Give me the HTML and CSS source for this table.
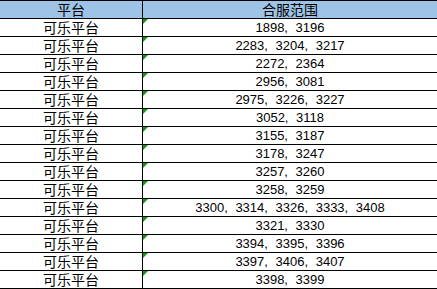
FILE: index.html
```html
<!DOCTYPE html>
<html lang="zh">
<head>
<meta charset="utf-8">
<link rel="stylesheet" href="styles.css">
</head>
<body>
<div class="sheet">
  <div class="row head"><div class="cell c1">平台</div><div class="cell c2">合服范围</div></div>
  <div class="row"><div class="cell c1">可乐平台</div><div class="cell c2 num">1898, 3196</div></div>
  <div class="row"><div class="cell c1">可乐平台</div><div class="cell c2 num">2283, 3204, 3217</div></div>
  <div class="row"><div class="cell c1">可乐平台</div><div class="cell c2 num">2272, 2364</div></div>
  <div class="row"><div class="cell c1">可乐平台</div><div class="cell c2 num">2956, 3081</div></div>
  <div class="row"><div class="cell c1">可乐平台</div><div class="cell c2 num">2975, 3226, 3227</div></div>
  <div class="row"><div class="cell c1">可乐平台</div><div class="cell c2 num">3052, 3118</div></div>
  <div class="row"><div class="cell c1">可乐平台</div><div class="cell c2 num">3155, 3187</div></div>
  <div class="row"><div class="cell c1">可乐平台</div><div class="cell c2 num">3178, 3247</div></div>
  <div class="row"><div class="cell c1">可乐平台</div><div class="cell c2 num">3257, 3260</div></div>
  <div class="row"><div class="cell c1">可乐平台</div><div class="cell c2 num">3258, 3259</div></div>
  <div class="row"><div class="cell c1">可乐平台</div><div class="cell c2 num">3300, 3314, 3326, 3333, 3408</div></div>
  <div class="row"><div class="cell c1">可乐平台</div><div class="cell c2 num">3321, 3330</div></div>
  <div class="row"><div class="cell c1">可乐平台</div><div class="cell c2 num">3394, 3395, 3396</div></div>
  <div class="row"><div class="cell c1">可乐平台</div><div class="cell c2 num">3397, 3406, 3407</div></div>
  <div class="row"><div class="cell c1">可乐平台</div><div class="cell c2 num">3398, 3399</div></div>
</div>
</body>
</html>
```
FILE: styles.css
```css
html, body {
  margin: 0;
  padding: 0;
  background: #ffffff;
  overflow: hidden;
}
.sheet {
  width: 437px;
  border-top: 1px solid #000;
  font-family: "Noto Sans CJK SC", sans-serif;
  font-size: 14px;
  color: #000;
}
.row {
  display: grid;
  grid-template-columns: 143px 1fr;
  height: 18px;
  box-sizing: border-box;
  border-bottom: 1px solid #000;
}
.head {
  height: 18px;
  background: #9dc3e6;
}
.cell {
  box-sizing: border-box;
  text-align: center;
  line-height: 17px;
  white-space: nowrap;
  position: relative;
}
.c1 {
  border-right: 1px solid #000;
}
.num {
  font-family: "Liberation Sans", sans-serif;
  font-size: 13px;
  word-spacing: 4px;
}
.num::before {
  content: "";
  position: absolute;
  left: 0;
  top: 0;
  width: 0;
  height: 0;
  border-top: 5px solid #119911;
  border-right: 5px solid transparent;
}
```
